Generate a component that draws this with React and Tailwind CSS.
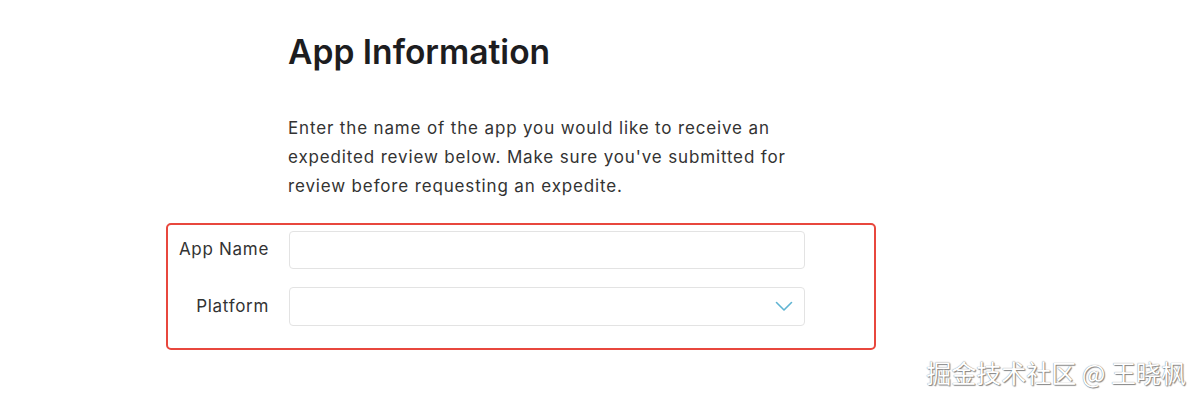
import React from "react";

function FormRow({ label, children }) {
  return (
    <div className="flex items-center">
      <label className="w-[101px] text-right text-[17px] tracking-[0.7px] text-[#333]">
        {label}
      </label>
      <div className="ml-[20px]">{children}</div>
    </div>
  );
}

function App() {
  return (
    <div className="relative h-[404px] w-[1200px] overflow-hidden bg-white font-['Inter','Liberation_Sans',sans-serif]">
      <div className="ml-[166px] w-[710px] pt-[30px]">
        <div className="pl-[122px]">
          <h1 className="text-[33.6px] font-semibold leading-[44px] text-[#1d1d1f]">
            App Information
          </h1>

          <p className="mt-[40px] w-[505px] text-[17px] leading-[29px] tracking-[0.85px] text-[#333]">
            Enter the name of the app you would like to receive an expedited
            review below. Make sure you've submitted for review before
            requesting an expedite.
          </p>
        </div>

        <div className="mt-[22px] rounded-[5px] border-2 border-[#e8473d] pt-[6px] pb-[22px]">
          <div className="flex flex-col gap-[18px]">
            <FormRow label="App Name">
              <input
                type="text"
                className="h-[38px] w-[516px] rounded-[4px] border border-[#e3e3e3] px-3 text-[16px] outline-none"
              />
            </FormRow>

            <FormRow label="Platform">
              <div className="relative h-[39px] w-[516px] rounded-[4px] border border-[#e3e3e3]">
                <svg
                  className="absolute right-[11px] top-[13px]"
                  width="18"
                  height="11"
                  viewBox="0 0 18 11"
                  fill="none"
                >
                  <polyline
                    points="1.5,1.5 9,9 16.5,1.5"
                    stroke="#5fb4d2"
                    strokeWidth="1.6"
                    strokeLinecap="round"
                    strokeLinejoin="round"
                  />
                </svg>
              </div>
            </FormRow>
          </div>
        </div>
      </div>

      <div className="absolute right-[14px] bottom-[13px] text-[25px] text-white font-['Noto_Sans_CJK_SC',sans-serif] [text-shadow:0_0_1px_#666,1px_1px_1px_#888]">
        掘金技术社区 @ 王晓枫
      </div>
    </div>
  );
}

export default App;
